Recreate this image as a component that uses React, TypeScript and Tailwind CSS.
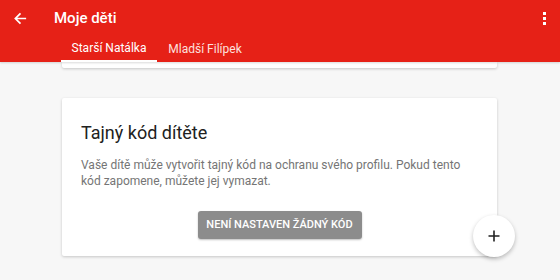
import React from "react";

export default function App() {
  return (
    <div
      className="relative w-[560px] h-[280px] overflow-hidden bg-[#f7f7f7]"
      style={{ fontFamily: "Roboto, 'Noto Sans', sans-serif" }}
    >
      <div className="relative z-10 bg-[#e62117] h-[62px] flex flex-col text-white shadow-[0_1px_2px_rgba(0,0,0,0.15)]">
        <div className="flex items-center h-[36px]">
          <div className="w-[54px] flex items-center pl-[13px]">
            <svg width="15" height="15" viewBox="0 0 16 16" fill="none" stroke="white" strokeWidth="1.8">
              <path d="M14 8H2.5M8 2.5L2.5 8L8 13.5" />
            </svg>
          </div>
          <div className="text-[15px] font-medium leading-none">Moje děti</div>
          <div className="ml-auto mr-[14px] flex flex-col gap-[2px] items-center">
            <div className="w-[3px] h-[3px] bg-white" />
            <div className="w-[3px] h-[3px] bg-white" />
            <div className="w-[3px] h-[3px] bg-white" />
          </div>
        </div>
        <div className="flex pl-[61px] h-[26px] text-[12px]">
          <div className="w-[96px] flex flex-col items-center">
            <div className="flex-1 flex items-center">Starší Natálka</div>
            <div className="h-[2px] w-full bg-white" />
          </div>
          <div className="w-[96px] flex flex-col items-center text-[#fde0de]">
            <div className="flex-1 flex items-center">Mladší Filípek</div>
          </div>
        </div>
      </div>
      <div className="flex flex-col pl-[62px] w-[497px]">
        <div className="h-[6px] bg-white shadow-[0_1px_3px_rgba(0,0,0,0.2)] rounded-b-[2px]" />
        <div className="mt-[30px] h-[158px] bg-white rounded-[2px] shadow-[0_1px_3px_rgba(0,0,0,0.2)] flex flex-col px-[19px]">
          <div className="mt-[24px] text-[18px] text-[#212121] leading-[22px]">Tajný kód dítěte</div>
          <div className="mt-[13px] text-[12px] leading-[16px] text-[#757575]">
            Vaše dítě může vytvořit tajný kód na ochranu svého profilu. Pokud tento kód zapomene, můžete jej vymazat.
          </div>
          <div className="flex justify-center mt-[22px]">
            <div className="w-[164px] h-[28px] bg-[#8c8c8c] rounded-[3px] text-white text-[11px] font-medium flex items-center justify-center shadow-[0_1px_2px_rgba(0,0,0,0.25)]">
              NENÍ NASTAVEN ŽÁDNÝ KÓD
            </div>
          </div>
        </div>
      </div>
      <div className="absolute left-[473px] top-[215px] w-[42px] h-[42px] rounded-full bg-white shadow-[0_2px_4px_rgba(0,0,0,0.25)] flex items-center justify-center">
        <svg width="12" height="12" viewBox="0 0 12 12" stroke="#212121" strokeWidth="1.6">
          <path d="M6 0.5V11.5M0.5 6H11.5" />
        </svg>
      </div>
    </div>
  );
}
